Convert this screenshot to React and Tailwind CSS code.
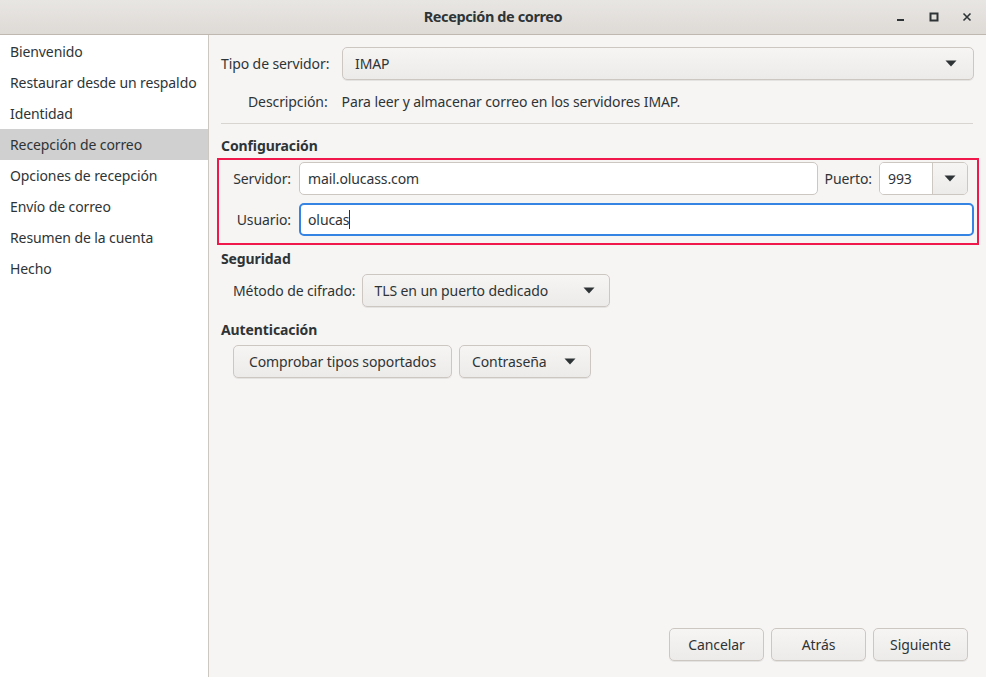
import React from 'react';

const steps = [
    'Bienvenido',
    'Restaurar desde un respaldo',
    'Identidad',
    'Recepción de correo',
    'Opciones de recepción',
    'Envío de correo',
    'Resumen de la cuenta',
    'Hecho',
];

const Caret = () => (
    <svg width="12" height="7" viewBox="0 0 12 7" className="shrink-0">
        <path d="M0.5 0.5 H11.5 L6 6.5 Z" fill="#2e3436" />
    </svg>
);

const btn = 'h-[33px] rounded-[5px] border border-[#cdc7c2] bg-gradient-to-b from-[#f6f5f4] to-[#edebe9] shadow-[0_1px_0_rgba(0,0,0,0.07)] text-[#2e3436] whitespace-nowrap';

const Combo = ({ label, className }) => (
    <div className={`${btn} flex items-center justify-between pl-[12px] pr-[14px] ${className}`}>
        <span>{label}</span>
        <Caret />
    </div>
);

const App = () => {
    return (
        <div className="w-[986px] h-[677px] flex flex-col bg-[#f6f5f4] text-[#2e3436] text-[14px] tracking-[-0.1px] overflow-hidden" style={{ fontFamily: '"Noto Sans", sans-serif' }}>
            {/* Title bar */}
            <div className="h-[35px] shrink-0 relative flex items-center justify-center bg-gradient-to-b from-[#e8e6e3] to-[#dedad6] border-b border-[#bfb8b1]">
                <span className="font-bold text-[14.5px] tracking-[-0.4px]">Recepción de correo</span>
                <div className="absolute right-[14px] top-0 h-full flex items-center gap-[23px] text-[#2e3436]">
                    <svg width="10" height="10" viewBox="0 0 10 10"><rect x="1" y="7" width="7" height="2" fill="#2e3436" /></svg>
                    <svg width="10" height="10" viewBox="0 0 10 10"><rect x="1.5" y="1.5" width="7" height="7" fill="none" stroke="#2e3436" strokeWidth="2" /></svg>
                    <svg width="10" height="10" viewBox="0 0 10 10"><path d="M1.5 1.5 L8.5 8.5 M8.5 1.5 L1.5 8.5" stroke="#2e3436" strokeWidth="1.6" /></svg>
                </div>
            </div>

            <div className="flex flex-1 min-h-0">
                {/* Sidebar */}
                <div className="w-[209px] shrink-0 bg-white border-r border-[#cdc7c2] pt-[1px]">
                    {steps.map((s, i) => (
                        <div key={s} className={`h-[31px] flex items-center pl-[10px] whitespace-nowrap ${i === 3 ? 'bg-[#d0d0d0]' : ''}`}>
                            {s}
                        </div>
                    ))}
                </div>

                {/* Main */}
                <div className="flex-1 flex flex-col pl-[12px] pr-[12px] pt-[12px] pb-[16px]">
                    <div className="flex items-center">
                        <span className="w-[121px] whitespace-nowrap">Tipo de servidor:</span>
                        <Combo label="IMAP" className="flex-1 pr-[16px]" />
                    </div>
                    <div className="flex items-center gap-[14px] mt-[11px] pl-[27px] whitespace-nowrap">
                        <span>Descripción:</span>
                        <span>Para leer y almacenar correo en los servidores IMAP.</span>
                    </div>
                    <div className="h-px bg-[#d8d4d0] mt-[11px] mr-[1px]" />

                    <div className="font-bold mt-[11px]">Configuración</div>
                    <div className="mt-[2px] -ml-[4px] -mr-[5px] border-2 border-[#f0174a] pt-[2px] pb-[7px] pl-[10px] pr-[3px]">
                        <div className="flex items-center">
                            <span className="w-[62px] text-right">Servidor:</span>
                            <div className="ml-[8px] flex-1 h-[33px] bg-white border border-[#cdc7c2] rounded-[5px] flex items-center pl-[8px]">mail.olucass.com</div>
                            <span className="ml-[7px]">Puerto:</span>
                            <div className="ml-[7px] mr-[6px] w-[89px] h-[33px] flex rounded-[5px] border border-[#cdc7c2] overflow-hidden">
                                <div className="flex-1 bg-white flex items-center pl-[8px]">993</div>
                                <div className="w-[35px] border-l border-[#cdc7c2] bg-gradient-to-b from-[#f6f5f4] to-[#edebe9] flex items-center justify-center"><Caret /></div>
                            </div>
                        </div>
                        <div className="flex items-center mt-[8px]">
                            <span className="w-[62px] text-right">Usuario:</span>
                            <div className="ml-[8px] flex-1 h-[33px] bg-white border-2 border-[#3584e4] rounded-[5px] flex items-center pl-[7px]">
                                olucas<span className="inline-block w-px h-[19px] bg-[#2e3436]" />
                            </div>
                        </div>
                    </div>

                    <div className="font-bold mt-[3px]">Seguridad</div>
                    <div className="flex items-center mt-[5px] pl-[12px]">
                        <span className="whitespace-nowrap">Método de cifrado:</span>
                        <Combo label="TLS en un puerto dedicado" className="ml-[6px] w-[248px]" />
                    </div>

                    <div className="font-bold mt-[12px]">Autenticación</div>
                    <div className="flex items-center mt-[5px] pl-[12px] gap-[7px]">
                        <button className={`${btn} w-[219px] flex items-center justify-center`}>Comprobar tipos soportados</button>
                        <Combo label="Contraseña" className="w-[132px] pl-[11px]" />
                    </div>

                    <div className="flex-1" />
                    <div className="flex justify-end gap-[7px] pr-[6px]">
                        <button className={`${btn} w-[95px]`}>Cancelar</button>
                        <button className={`${btn} w-[95px]`}>Atrás</button>
                        <button className={`${btn} w-[95px]`}>Siguiente</button>
                    </div>
                </div>
            </div>
        </div>
    );
};

export default App;
